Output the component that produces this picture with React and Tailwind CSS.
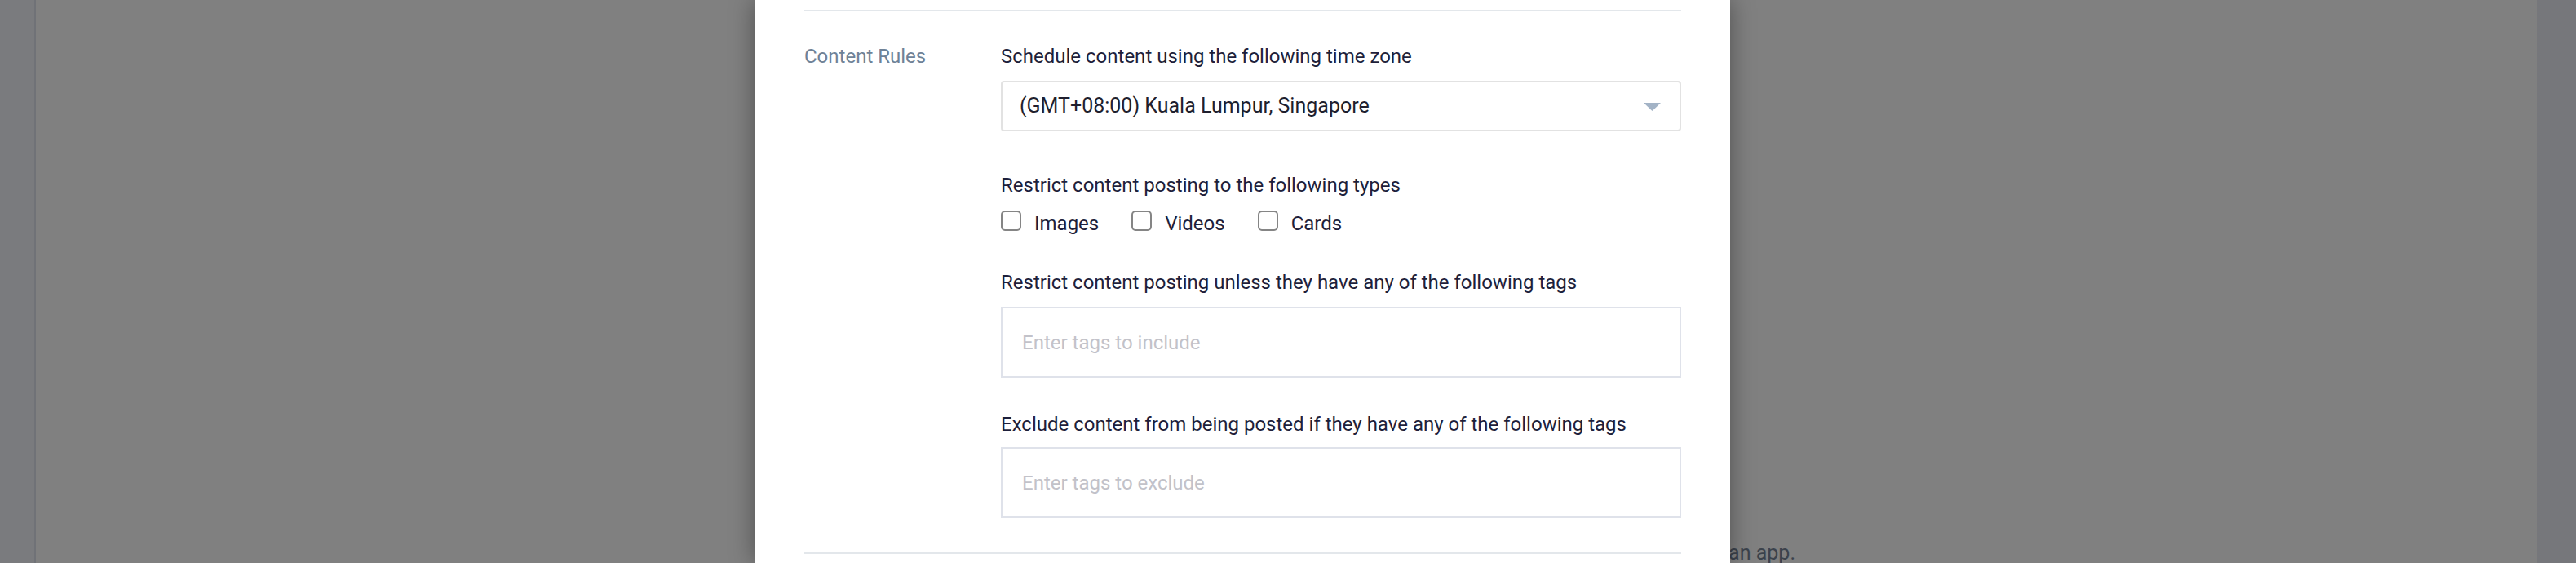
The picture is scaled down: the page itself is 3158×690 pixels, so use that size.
import React from "react";

function Checkbox({ label }) {
  return (
    <label className="flex items-start">
      <span className="mt-[-1px] block h-[25px] w-[25px] shrink-0 rounded-[5px] border-2 border-[#858585] bg-white" />
      <span className="ml-[16px] leading-[30px]">{label}</span>
    </label>
  );
}

function TagInput({ placeholder }) {
  return (
    <div className="flex h-[87px] items-center border-2 border-[#dfe2ea] bg-white pl-[24px]">
      <span className="leading-[30px] text-[#c2c2c9]">{placeholder}</span>
    </div>
  );
}

export default function App() {
  return (
    <div className="relative h-[690px] w-[3158px] overflow-hidden bg-[#808080] font-['Roboto','Liberation_Sans',sans-serif] text-[24px]">
      <div className="flex h-full">
        <div className="w-[44px] border-r-2 border-[#707277] bg-[#7a7b7e]" />
        <div className="flex flex-1 flex-col justify-end pb-0">
          <div className="mb-[-3px] w-[2157px] overflow-hidden whitespace-nowrap text-right text-[25px] leading-[30px] text-[#3b424c]">
            Connect your account to get started with an app.
          </div>
        </div>
        <div className="w-[48px] bg-[#76777b]" />
      </div>

      <div className="absolute left-[925px] top-0 h-[690px] w-[1196px] bg-white pl-[61px] pr-[60px] shadow-[0_0_28px_rgba(0,0,0,0.38)]">
        <div className="mt-[12px] h-[2px] bg-[#e3e7eb]" />
        <div className="flex pb-[42px] pt-[40px]">
          <div className="w-[241px] shrink-0 leading-[30px] text-[#6f8297]">Content Rules</div>
          <div className="flex flex-1 flex-col text-[#1e1f3b]">
            <div className="leading-[30px]">Schedule content using the following time zone</div>
            <div className="mt-[15px] flex h-[62px] items-center justify-between rounded-[4px] border-2 border-[#e2e2e2] bg-white pl-[21px] pr-[23px]">
              <span className="text-[25px] leading-[30px] text-[#1f1f2e]">(GMT+08:00) Kuala Lumpur, Singapore</span>
              <svg width="21" height="10" viewBox="0 0 21 10" className="mt-[2px]">
                <polygon points="0,0 21,0 10.5,10" fill="#a3b3c6" />
              </svg>
            </div>

            <div className="mt-[51px] leading-[30px]">Restrict content posting to the following types</div>
            <div className="mt-[17px] flex gap-[40px]">
              <Checkbox label="Images" />
              <Checkbox label="Videos" />
              <Checkbox label="Cards" />
            </div>

            <div className="mt-[42px] leading-[30px]">Restrict content posting unless they have any of the following tags</div>
            <div className="mt-[15px]">
              <TagInput placeholder="Enter tags to include" />
            </div>

            <div className="mt-[42px] leading-[30px]">Exclude content from being posted if they have any of the following tags</div>
            <div className="mt-[13px]">
              <TagInput placeholder="Enter tags to exclude" />
            </div>
          </div>
        </div>
        <div className="h-[2px] bg-[#e3e7eb]" />
      </div>
    </div>
  );
}
